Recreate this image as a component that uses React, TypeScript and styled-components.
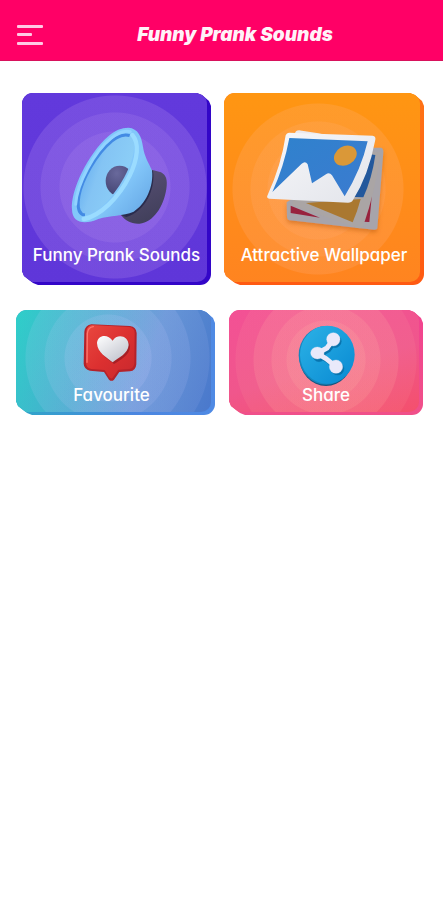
import React from "react";
import styled, { createGlobalStyle } from "styled-components";

const GlobalStyle = createGlobalStyle`
  * { box-sizing: border-box; }
  body {
    margin: 0;
    background: #ffffff;
    font-family: "Inter", "Liberation Sans", sans-serif;
  }
`;

const Header = styled.header`
  display: flex;
  align-items: center;
  height: 61px;
  padding: 9px 16px 0 17px;
  background: #ff0066;
  border-bottom: 1px solid #d8125c;
`;

const MenuButton = styled.button`
  display: flex;
  flex-direction: column;
  justify-content: space-between;
  width: 26px;
  height: 20px;
  padding: 0;
  border: 0;
  background: none;
  cursor: pointer;
`;

const MenuBar = styled.span<{ $short?: boolean }>`
  width: ${(p) => (p.$short ? "15px" : "100%")};
  height: 3px;
  border-radius: 1px;
  background: #ffc8e4;
`;

const Title = styled.h1`
  flex: 1;
  margin: 0;
  text-align: center;
  font: italic 900 19px/24px "Inter", "Noto Sans", sans-serif;
  color: #fff2f8;
`;

const Main = styled.main`
  display: grid;
  gap: 25px;
  padding-top: 32px;
`;

const FeatureRow = styled.section`
  display: grid;
  grid-template-columns: 189fr 200fr;
  gap: 13px;
  padding: 0 19px 0 22px;
`;

const ActionRow = styled.section`
  display: grid;
  grid-template-columns: 199fr 194fr;
  gap: 14px;
  padding: 0 20px 0 16px;
`;

type Tone = {
  edge: string;
  face: string;
  center: string;
  inset: string;
  rings: [number, number, number];
  alphas: [number, number, number];
  glow: string;
  outer?: number;
};

const tones: Record<string, Tone> = {
  violet: {
    edge: "#3306c8",
    face: "linear-gradient(#6239dc, #5f36d9)",
    center: "93px 94px",
    inset: "22px 0 0 4px",
    rings: [55, 74, 91],
    alphas: [0.08, 0.09, 0.13],
    glow: "255, 215, 255",
  },
  orange: {
    edge: "linear-gradient(#ff7316, #ff5a12)",
    face: "linear-gradient(#ff9612, #ff8420)",
    center: "94px 96px",
    inset: "22px 0 0 4px",
    rings: [50, 67, 85],
    alphas: [0.12, 0.14, 0.18],
    glow: "255, 185, 150",
  },
  teal: {
    edge: "linear-gradient(90deg, #2fa6c8, #4b86e0 60%, #4f8ae4)",
    face: "linear-gradient(110deg, #1fcfc4 0%, #3aa9c9 38%, #5a8fd2 65%, #4a78cc 100%)",
    center: "92px 48px",
    inset: "3px 4px 0 0",
    rings: [43, 63, 82],
    alphas: [0.14, 0.12, 0.12],
    glow: "205, 205, 255",
    outer: 101,
  },
  pink: {
    edge: "linear-gradient(#f2438f, #f0508a)",
    face: "linear-gradient(165deg, #f35195 0%, #f0568c 55%, #f4506c 100%)",
    center: "97px 50px",
    inset: "3px 0 0 4px",
    rings: [39, 54, 72],
    alphas: [0.16, 0.16, 0.16],
    glow: "255, 185, 165",
    outer: 90,
  },
};

const ring = (t: Tone, radius: number, alpha: number) =>
  `radial-gradient(circle at ${t.center}, rgba(${t.glow}, ${alpha}) ${radius}px, transparent ${radius + 1}px)`;

const faceLayers = (t: Tone) =>
  [
    ...t.rings.map((r, i) => ring(t, r, t.alphas[i])),
    ...(t.outer ? [ring(t, t.outer, 0.09)] : []),
    t.face,
  ].join(", ");

const Card = styled.button<{ $tone: Tone; $compact?: boolean }>`
  display: flex;
  min-width: 0;
  min-height: ${(p) => (p.$compact ? "105px" : "192px")};
  padding: 0 4px 3px 0;
  border: 0;
  border-radius: 11px;
  background: ${(p) => p.$tone.edge};
  clip-path: polygon(
    0 0,
    calc(100% - 14px) 0,
    calc(100% - 9px) 2px,
    calc(100% - 2px) 8px,
    100% 13px,
    100% 100%,
    16px 100%,
    11px calc(100% - 2px),
    2px calc(100% - 9px),
    0 calc(100% - 14px)
  );
  color: #ffffff;
  font-family: inherit;
  cursor: pointer;
`;

const Face = styled.span<{ $tone: Tone }>`
  flex: 1;
  display: flex;
  flex-direction: column;
  align-items: center;
  min-width: 0;
  padding: ${(p) => p.$tone.inset};
  border-radius: 11px 10px 10px 11px;
  background: ${(p) => faceLayers(p.$tone)};
`;

const Label = styled.span<{ $compact?: boolean }>`
  margin-top: ${(p) => (p.$compact ? "0" : "8px")};
  font-size: 17px;
  font-weight: 500;
  line-height: ${(p) => (p.$compact ? "20px" : "24px")};
  font-feature-settings: "cv11";
  white-space: nowrap;
`;

const Art = styled.svg`
  display: block;
  flex: none;
  overflow: visible;
`;

const SpeakerArt = () => (
  <Art width="120" height="120" viewBox="-12 0 360 360" aria-hidden="true">
    <defs>
      <linearGradient id="horn" x1="0" y1="0" x2="1" y2="1">
        <stop offset="0" stopColor="#7cc4fb" />
        <stop offset="0.6" stopColor="#84c8fa" />
        <stop offset="1" stopColor="#5e9fe0" />
      </linearGradient>
      <linearGradient id="bowl" x1="0" y1="0.2" x2="1" y2="0.7">
        <stop offset="0" stopColor="#5aa5ee" />
        <stop offset="0.4" stopColor="#84c4f4" />
        <stop offset="1" stopColor="#8ed2f8" />
      </linearGradient>
      <linearGradient id="magnet" x1="0" y1="0" x2="0.4" y2="1">
        <stop offset="0" stopColor="#5b5278" />
        <stop offset="1" stopColor="#42405c" />
      </linearGradient>
      <radialGradient id="dome" cx="0.4" cy="0.25" r="0.8">
        <stop offset="0" stopColor="#69699c" />
        <stop offset="1" stopColor="#414270" />
      </radialGradient>
      <clipPath id="bowlClip">
        <path d="M198 60C230 64 222 118 202 162C172 230 114 298 72 300C42 298 46 240 76 180C106 120 160 58 198 60Z" />
      </clipPath>
    </defs>
    <path d="M266 163L300 172C316 180 320 196 316 222C308 276 276 322 236 326C212 328 192 316 180 300Z" fill="url(#magnet)" />
    <path d="M262 160L276 168C284 222 252 290 196 306L180 300Z" fill="#2a2b4c" />
    <path d="M202 38C232 40 242 66 246 96C250 124 262 142 273 166C279 214 254 268 218 290C186 304 148 300 112 312C70 330 34 324 33 284C28 228 80 118 142 64C162 46 182 38 202 38Z" fill="url(#horn)" />
    <path d="M198 60C230 64 222 118 202 162C172 230 114 298 72 300C42 298 46 240 76 180C106 120 160 58 198 60Z" fill="url(#bowl)" />
    <path d="M206 62C162 48 106 120 76 180C46 240 42 298 72 300" fill="none" stroke="#438be4" strokeWidth="9" />
    <g clipPath="url(#bowlClip)">
      <ellipse cx="176" cy="198" rx="42" ry="46" fill="url(#dome)" />
    </g>
    <path d="M214 60C236 84 230 132 206 182C174 248 116 304 68 312" fill="none" stroke="#9bdcff" strokeWidth="13" strokeLinecap="round" />
    <path d="M44 268C48 205 100 110 150 70C172 52 192 46 208 50" fill="none" stroke="#92d3ff" strokeWidth="9" strokeLinecap="round" />
  </Art>
);

const WallpaperArt = () => (
  <Art width="130" height="120" viewBox="-3 0 390 360" aria-hidden="true">
    <defs>
      <linearGradient id="paper" x1="0" y1="0" x2="1" y2="1">
        <stop offset="0" stopColor="#f7f7fa" />
        <stop offset="1" stopColor="#e2e4ea" />
      </linearGradient>
      <linearGradient id="sky" x1="0" y1="0" x2="1" y2="1">
        <stop offset="0" stopColor="#2f82cd" />
        <stop offset="1" stopColor="#3b7bd0" />
      </linearGradient>
      <filter id="artShadow" x="-20%" y="-20%" width="140%" height="150%">
        <feDropShadow dx="0" dy="8" stdDeviation="7" floodColor="#a44a10" floodOpacity="0.4" />
      </filter>
    </defs>
    <g filter="url(#artShadow)">
      <path d="M336 98L364 98Q371 101 370 112L352 340Q350 345 342 344L90 316Q81 314 81 305L80 262Z" fill="#a7a4aa" />
      <path d="M336 235L328 321L306 320Z" fill="#98203d" />
      <path d="M92 272L180 308L92 294Z" fill="#98203d" />
    </g>
    <path d="M340 110L362 112Q346 230 310 332Q304 343 292 339L98 270L98 250Z" fill="#aaa5a5" />
    <path d="M330 118L346 120Q336 190 310 247L260 245Z" fill="#23589c" />
    <path d="M138 264L302 252Q292 290 278 322Z" fill="#aa7830" />
    <path d="M108 49Q114 43 126 47L185 56L100 62Z" fill="#ece9ec" />
    <path d="M87 53L338 62Q348 64 346 74Q326 180 279 255Q275 263 264 263L28 251Q18 249 23 240Q64 150 77 61Q80 53 87 53Z" fill="url(#paper)" />
    <path d="M88 69L323 79Q303 165 254 244L216 181Q208 171 198 178L156 205L143 148Q136 136 125 146L37 231Q72 155 88 69Z" fill="url(#sky)" />
    <ellipse cx="256" cy="122" rx="36" ry="28" transform="rotate(-30 256 122)" fill="#da9838" />
  </Art>
);

const FavouriteArt = () => (
  <Art width="80" height="72" viewBox="0 -6 240 216" aria-hidden="true">
    <defs>
      <linearGradient id="bubble" x1="0" y1="0" x2="1" y2="1">
        <stop offset="0" stopColor="#e9483f" />
        <stop offset="0.5" stopColor="#dc3030" />
        <stop offset="1" stopColor="#c8282d" />
      </linearGradient>
      <linearGradient id="heart" x1="0" y1="0" x2="0.8" y2="1">
        <stop offset="0" stopColor="#ffffff" />
        <stop offset="1" stopColor="#bfc2cc" />
      </linearGradient>
    </defs>
    <path d="M58 28L174 33Q193 36 194 54L193 148Q191 168 174 169L142 171L126 194Q119 201 111 194L96 171L54 167Q36 163 35 146L37 50Q40 30 58 28Z" fill="#b5222a" />
    <path d="M60 30L171 36Q188 38 188 54L187 144Q186 161 171 162L139 164L122 188Q118 193 112 187L98 165L58 162Q42 159 42 143L43 50Q44 33 60 30Z" fill="url(#bubble)" />
    <path d="M45 142L46 55Q48 37 64 35" fill="none" stroke="#ff776e" strokeWidth="4" strokeLinecap="round" />
    <path d="M126 147C108 132 80 118 80 88C82 62 112 62 126 82C138 62 174 68 174 96C172 122 146 134 126 147Z" fill="#8f1820" opacity="0.65" />
    <path d="M122 142C104 126 76 114 75 84C77 58 108 56 122 77C134 56 169 60 170 90C168 116 140 128 122 142Z" fill="url(#heart)" />
  </Art>
);

const ShareArt = () => (
  <Art width="80" height="72" viewBox="-12 -6 240 216" aria-hidden="true">
    <defs>
      <linearGradient id="disc" x1="0" y1="0" x2="1" y2="1">
        <stop offset="0" stopColor="#2cb2e6" />
        <stop offset="1" stopColor="#0889d2" />
      </linearGradient>
    </defs>
    <ellipse cx="108" cy="125" rx="80" ry="88" fill="#14557f" />
    <ellipse cx="108" cy="121" rx="82" ry="88" fill="#1586bd" />
    <ellipse cx="112" cy="119" rx="82" ry="87" fill="url(#disc)" />
    <g transform="translate(5 6)" stroke="#0874ae" fill="#0874ae">
      <path d="M130 73L111 99L82 115L108 131L138 155" fill="none" strokeWidth="14" />
      <circle cx="130" cy="73" r="19" />
      <circle cx="82" cy="115" r="19" />
      <circle cx="138" cy="155" r="19" />
    </g>
    <g stroke="#e9e9fa" fill="#e9e9fa">
      <path d="M130 73L111 99L82 115L108 131L138 155" fill="none" strokeWidth="15" strokeLinejoin="round" />
      <circle cx="130" cy="73" r="20" />
      <ellipse cx="82" cy="114" rx="20" ry="18" />
      <circle cx="138" cy="155" r="20" />
    </g>
  </Art>
);

type TileProps = {
  tone: Tone;
  label: string;
  compact?: boolean;
  children: React.ReactNode;
};

const Tile = ({ tone, label, compact, children }: TileProps) => (
  <Card type="button" $tone={tone} $compact={compact}>
    <Face $tone={tone}>
      {children}
      <Label $compact={compact}>{label}</Label>
    </Face>
  </Card>
);

export default function App() {
  return (
    <>
      <GlobalStyle />
      <Header>
        <MenuButton type="button" aria-label="Menu">
          <MenuBar />
          <MenuBar $short />
          <MenuBar />
        </MenuButton>
        <Title>Funny Prank Sounds</Title>
      </Header>
      <Main>
        <FeatureRow>
          <Tile tone={tones.violet} label="Funny Prank Sounds">
            <SpeakerArt />
          </Tile>
          <Tile tone={tones.orange} label="Attractive Wallpaper">
            <WallpaperArt />
          </Tile>
        </FeatureRow>
        <ActionRow>
          <Tile tone={tones.teal} label="Favourite" compact>
            <FavouriteArt />
          </Tile>
          <Tile tone={tones.pink} label="Share" compact>
            <ShareArt />
          </Tile>
        </ActionRow>
      </Main>
    </>
  );
}
